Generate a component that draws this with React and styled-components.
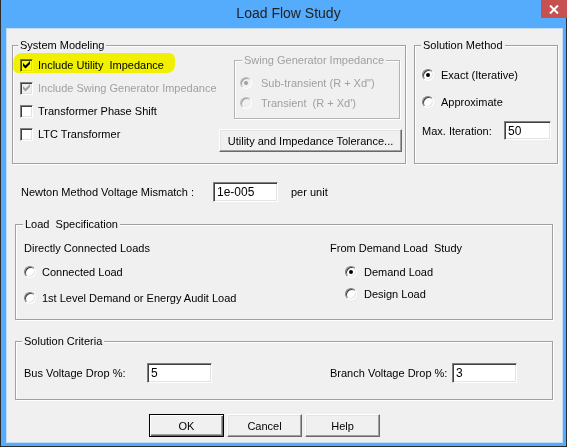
import React from 'react';
import styled, { createGlobalStyle, css } from 'styled-components';

const GlobalStyle = createGlobalStyle`
  html, body {
    margin: 0;
    padding: 0;
    background: #fff;
  }
  body {
    font-family: "Liberation Sans", Arial, sans-serif;
    font-size: 11px;
    color: #000;
  }
`;

const Window = styled.div`
  width: 567px;
  height: 447px;
  box-sizing: border-box;
  background: #55abfc;
  border: 1px solid #2b2b2b;
  border-top: none;
  padding: 0 3px 3px 5px;
  display: flex;
  flex-direction: column;
`;

const TitleBar = styled.div`
  height: 28px;
  display: flex;
  align-items: flex-start;
`;

const TitleText = styled.div`
  flex: 1;
  padding-left: 30px;
  text-align: center;
  font-size: 14px;
  line-height: 27px;
  color: #222;
`;

const CloseButton = styled.div`
  width: 26px;
  height: 18px;
  margin-right: -4px;
  background: #c75050;
  display: flex;
  align-items: center;
  justify-content: center;
`;

const Client = styled.div`
  flex: 1;
  box-sizing: border-box;
  background: #f0f0f0;
  border: 1px solid #c6def5;
  padding: 10px 0 0 5px;
  display: flex;
  flex-direction: column;
`;

const TopRow = styled.div`
  display: flex;
  gap: 8px;
  align-items: flex-start;
`;

const Group = styled.fieldset`
  margin: 0;
  padding: 0;
  min-width: 0;
  box-sizing: border-box;
  width: ${p => p.$w}px;
  height: ${p => p.$h}px;
  border: 1px solid ${p => (p.$disabled ? '#b4b4b4' : '#a0a0a0')};
  box-shadow: inset 1px 1px 0 #fff, 1px 1px 0 #fff;
`;

const Caption = styled.legend`
  margin-left: ${p => p.$indent}px;
  padding: 0 2px;
  line-height: 13px;
  font-size: 11px;
  white-space: pre;
  background: #f0f0f0;
  color: ${p => (p.$disabled ? '#a0a0a0' : '#000')};
`;

const SystemBody = styled.div`
  display: flex;
  justify-content: space-between;
  padding: 2px 3px 0 7px;
`;

const CheckList = styled.div`
  display: flex;
  flex-direction: column;
  gap: 7px;
  padding-top: 3px;
`;

const OptionRow = styled.div`
  position: relative;
  display: flex;
  align-items: center;
  height: 16px;
  gap: ${p => p.$gap ?? 6}px;
  white-space: pre;
  color: ${p => (p.$disabled ? '#a0a0a0' : '#000')};
`;

const Marker = styled.span`
  position: absolute;
  left: -7px;
  top: -4px;
  width: 162px;
  height: 20px;
  border-radius: 9px 6px 8px 5px;
  background: #ffff00;
  mix-blend-mode: multiply;
  pointer-events: none;
`;

const sunken = css`
  box-sizing: border-box;
  border: 1px solid;
  border-color: #808080 #fff #fff #808080;
  box-shadow: inset 1px 1px 0 #404040, inset -1px -1px 0 #e3e3e3;
`;

const CheckBox = styled.span`
  ${sunken};
  flex: none;
  width: 13px;
  height: 13px;
  display: flex;
  align-items: center;
  justify-content: center;
  background: ${p => (p.$disabled ? '#f0f0f0' : '#fff')};
`;

const RadioDot = styled.span`
  ${sunken};
  flex: none;
  position: relative;
  width: 12px;
  height: 12px;
  border-radius: 50%;
  background: ${p => (p.$disabled ? '#f0f0f0' : '#fff')};
  ${p => p.$disabled && css`
    border-color: #c0c0c0 #fff #fff #c0c0c0;
    box-shadow: inset 1px 1px 0 #a0a0a0;
  `}

  &::after {
    content: '';
    display: ${p => (p.$checked ? 'block' : 'none')};
    position: absolute;
    left: 3px;
    top: 3px;
    width: 4px;
    height: 4px;
    border-radius: 50%;
    background: ${p => (p.$disabled ? '#a0a0a0' : '#000')};
  }
`;

const RightCol = styled.div`
  display: flex;
  flex-direction: column;
  align-items: flex-end;
  width: 183px;
`;

const SwingBody = styled.div`
  display: flex;
  flex-direction: column;
  gap: 4px;
  padding: 8px 0 0 5px;
`;

const ClassicButton = styled.button`
  box-sizing: border-box;
  width: ${p => p.$w}px;
  height: 23px;
  margin: 0;
  padding: 0;
  font-family: inherit;
  font-size: 11px;
  color: #000;
  background: #f0f0f0;
  border: 1px solid;
  border-color: #fff #696969 #696969 #fff;
  box-shadow: inset -1px -1px 0 #a0a0a0, inset 1px 1px 0 #e3e3e3;
  ${p => p.$default && css`
    border-color: #000;
    box-shadow: inset 1px 1px 0 #fff, inset -1px -1px 0 #696969, inset -2px -2px 0 #a0a0a0;
  `}
`;

const ToleranceButton = styled(ClassicButton)`
  margin-top: 10px;
`;

const MethodBody = styled.div`
  display: flex;
  flex-direction: column;
  padding: 15px 0 0 7px;
`;

const MethodList = styled.div`
  display: flex;
  flex-direction: column;
  gap: 11px;
`;

const FieldRow = styled.div`
  display: flex;
  align-items: center;
  margin-top: ${p => p.$top ?? 0}px;
  padding-left: ${p => p.$left ?? 0}px;
`;

const FieldLabel = styled.span`
  width: ${p => p.$w}px;
  flex: none;
  white-space: pre;
`;

const TextBox = styled.input`
  ${sunken};
  width: ${p => p.$w}px;
  height: ${p => p.$h ?? 20}px;
  margin: 0;
  padding: 0 0 0 3px;
  font-family: inherit;
  font-size: 12px;
  color: #000;
  background: #fff;
  outline: none;
`;

const Unit = styled.span`
  margin-left: 13px;
`;

const WideGroup = styled(Group)`
  margin-left: 3px;
  margin-top: ${p => p.$top}px;
`;

const LoadBody = styled.div`
  display: grid;
  grid-template-columns: 306px 1fr;
  padding: 11px 0 0 8px;
`;

const LoadColumn = styled.div`
  display: flex;
  flex-direction: column;
`;

const ColumnHeading = styled.div`
  line-height: 13px;
  white-space: pre;
  margin-bottom: 9px;
`;

const LoadOptions = styled.div`
  display: flex;
  flex-direction: column;
  gap: ${p => p.$gap}px;
  padding-left: ${p => p.$indent}px;
`;

const CriteriaBody = styled.div`
  display: grid;
  grid-template-columns: 306px 1fr;
  padding: 15px 0 0 8px;
`;

const ButtonRow = styled.div`
  display: flex;
  gap: 3px;
  margin-top: 14px;
  padding-left: 137px;
`;

const Check = ({ checked, disabled, highlight, children }) => (
  <OptionRow $disabled={disabled} $gap={5}>
    <CheckBox $disabled={disabled}>
      {checked && (
        <svg width="7" height="8" viewBox="0 0 7 8">
          <polygon points="0,2 2.5,4.5 7,0 7,3 2.5,7.5 0,5" fill={disabled ? '#a0a0a0' : '#000'} />
        </svg>
      )}
    </CheckBox>
    <span>{children}</span>
    {highlight && <Marker />}
  </OptionRow>
);

const Radio = ({ checked, disabled, gap, children }) => (
  <OptionRow $disabled={disabled} $gap={gap}>
    <RadioDot $checked={checked} $disabled={disabled} />
    <span>{children}</span>
  </OptionRow>
);

export default function App() {
  return (
    <>
      <GlobalStyle />
      <Window>
        <TitleBar>
          <TitleText>Load Flow Study</TitleText>
          <CloseButton>
            <svg width="10" height="9" viewBox="0 0 10 9">
              <path d="M1 0.5 L9 8.5 M9 0.5 L1 8.5" stroke="#fff" strokeWidth="2" />
            </svg>
          </CloseButton>
        </TitleBar>

        <Client>
          <TopRow>
            <Group $w={394} $h={125}>
              <Caption $indent={5}>System Modeling</Caption>
              <SystemBody>
                <CheckList>
                  <Check checked highlight>{'Include Utility  Impedance'}</Check>
                  <Check checked disabled>Include Swing Generator Impedance</Check>
                  <Check>Transformer Phase Shift</Check>
                  <Check>LTC Transformer</Check>
                </CheckList>
                <RightCol>
                  <Group $w={166} $h={65} $disabled style={{ marginRight: 2 }}>
                    <Caption $indent={7} $disabled>Swing Generator Impedance</Caption>
                    <SwingBody>
                      <Radio checked disabled gap={9}>{'Sub-transient (R + Xd")'}</Radio>
                      <Radio disabled gap={9}>{"Transient  (R + Xd')"}</Radio>
                    </SwingBody>
                  </Group>
                  <ToleranceButton $w={183}>Utility and Impedance Tolerance...</ToleranceButton>
                </RightCol>
              </SystemBody>
            </Group>

            <Group $w={144} $h={125}>
              <Caption $indent={6}>Solution Method</Caption>
              <MethodBody>
                <MethodList>
                  <Radio checked gap={7}>Exact (Iterative)</Radio>
                  <Radio gap={7}>Approximate</Radio>
                </MethodList>
                <FieldRow $top={11}>
                  <FieldLabel $w={82}>Max. Iteration:</FieldLabel>
                  <TextBox $w={47} $h={19} value="50" readOnly />
                </FieldRow>
              </MethodBody>
            </Group>
          </TopRow>

          <FieldRow $top={18} $left={9}>
            <FieldLabel $w={192}>Newton Method Voltage Mismatch :</FieldLabel>
            <TextBox $w={65} value="1e-005" readOnly />
            <Unit>per unit</Unit>
          </FieldRow>

          <WideGroup $w={538} $h={102} $top={16}>
            <Caption $indent={7}>{'Load  Specification'}</Caption>
            <LoadBody>
              <LoadColumn>
                <ColumnHeading>Directly Connected Loads</ColumnHeading>
                <LoadOptions $gap={10} $indent={0}>
                  <Radio gap={6}>Connected Load</Radio>
                  <Radio gap={6}>1st Level Demand or Energy Audit Load</Radio>
                </LoadOptions>
              </LoadColumn>
              <LoadColumn>
                <ColumnHeading>{'From Demand Load  Study'}</ColumnHeading>
                <LoadOptions $gap={6} $indent={15}>
                  <Radio checked gap={7}>Demand Load</Radio>
                  <Radio gap={7}>Design Load</Radio>
                </LoadOptions>
              </LoadColumn>
            </LoadBody>
          </WideGroup>

          <WideGroup $w={538} $h={65} $top={15}>
            <Caption $indent={6}>Solution Criteria</Caption>
            <CriteriaBody>
              <FieldRow>
                <FieldLabel $w={123}>Bus Voltage Drop %:</FieldLabel>
                <TextBox $w={65} value="5" readOnly />
              </FieldRow>
              <FieldRow>
                <FieldLabel $w={122}>Branch Voltage Drop %:</FieldLabel>
                <TextBox $w={65} value="3" readOnly />
              </FieldRow>
            </CriteriaBody>
          </WideGroup>

          <ButtonRow>
            <ClassicButton $w={75} $default>OK</ClassicButton>
            <ClassicButton $w={75}>Cancel</ClassicButton>
            <ClassicButton $w={75}>Help</ClassicButton>
          </ButtonRow>
        </Client>
      </Window>
    </>
  );
}
